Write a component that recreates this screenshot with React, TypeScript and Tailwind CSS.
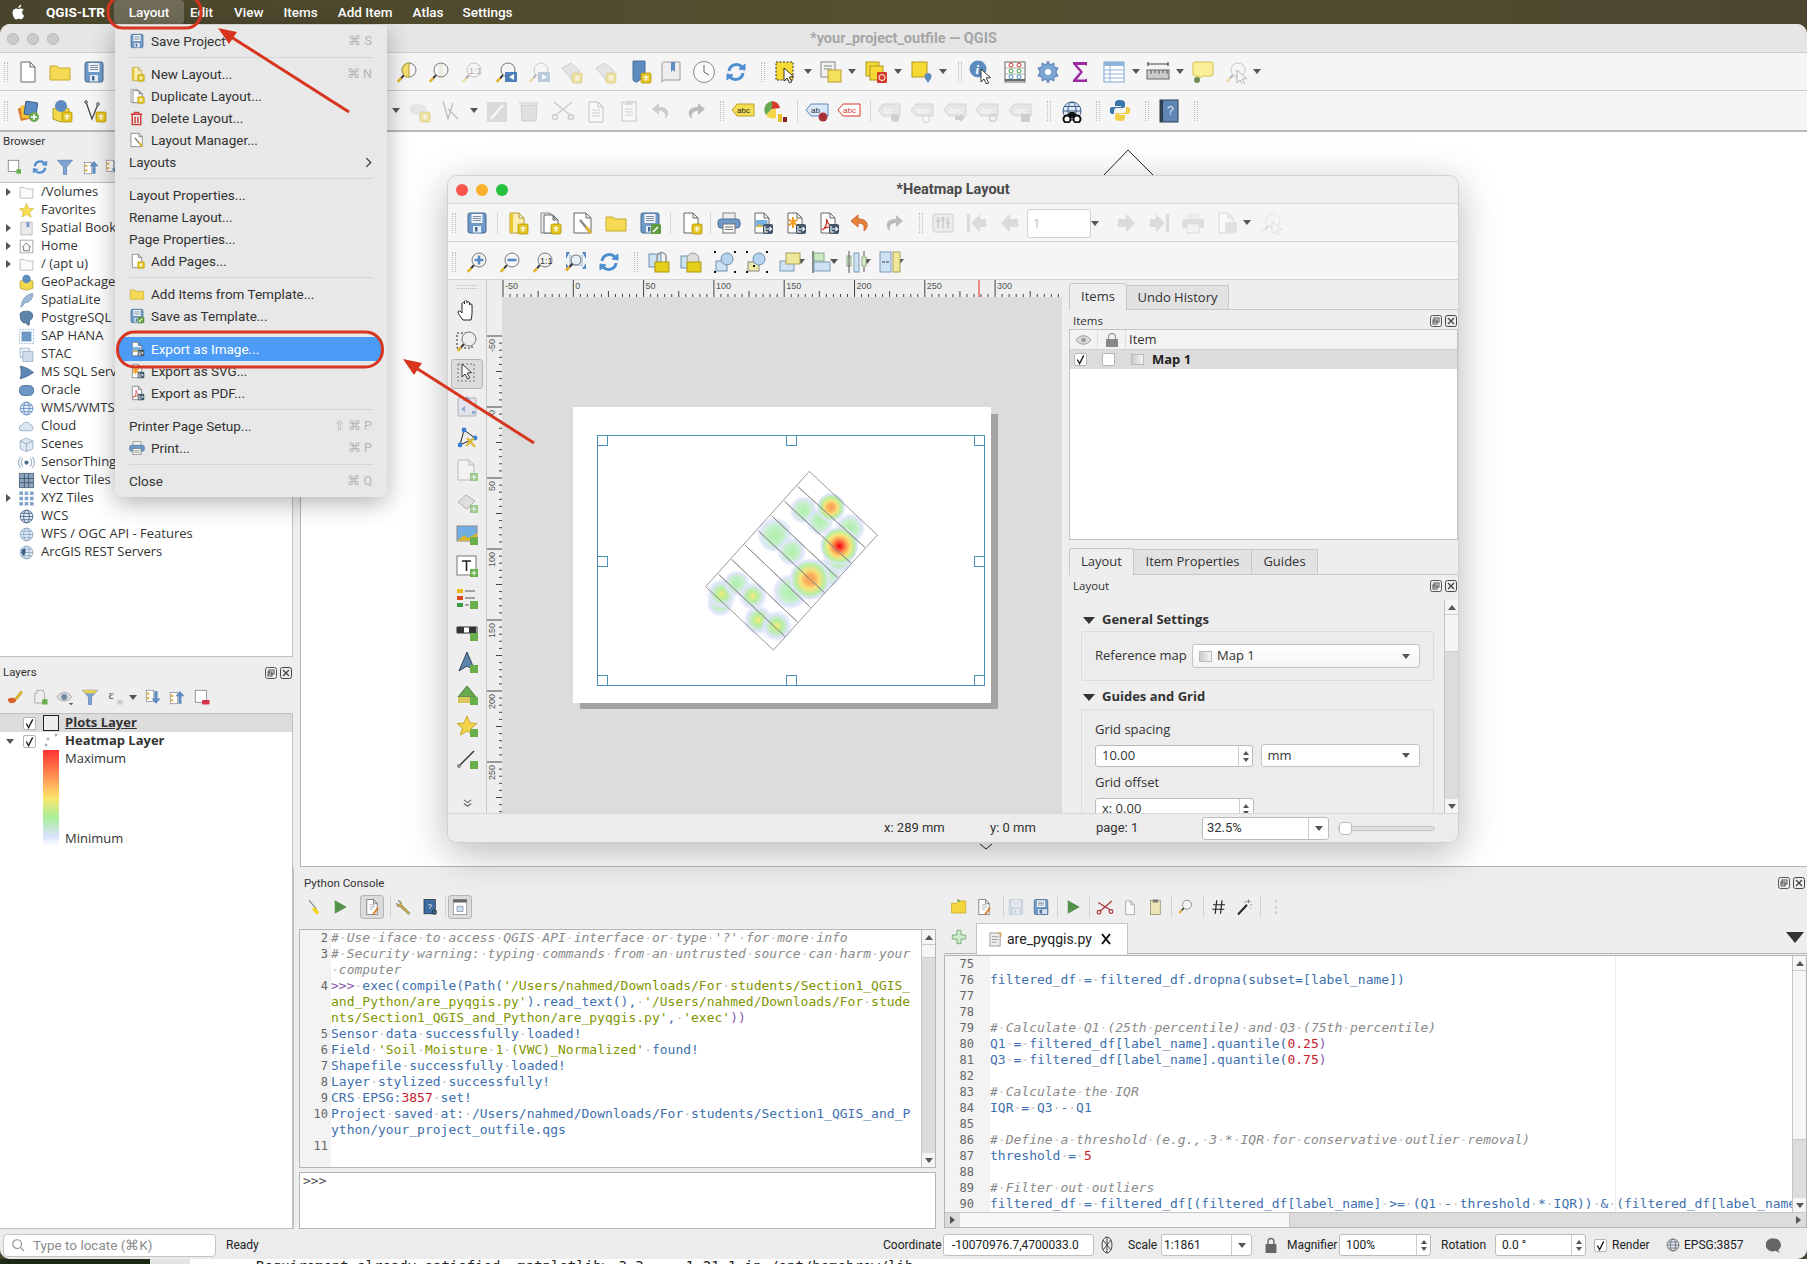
import type { ReactNode } from 'react';

// --- small drawing helpers for the QGIS toolbar icons ---
function Page({ x = 5, y = 2, w = 14, h = 20, fill = '#fff', stroke = '#666' }) {
  return <path d={`M${x} ${y}h${w - 5}l5 5v${h - 5}h-${w}z M${x + w - 5} ${y}v5h5`} fill={fill} stroke={stroke} />;
}
function Badge({ x = 13, y = 13 }) {
  return (
    <g>
      <rect x={x} y={y} width="10" height="10" rx="1.5" fill="#e3c31a" stroke="#b0960f" strokeWidth=".8" />
      <path d={`M${x + 5} ${y + 2}v6M${x + 2.4} ${y + 3.5}l5.2 3M${x + 7.6} ${y + 3.5}l-5.2 3`} stroke="#fff" strokeWidth="1.1" />
    </g>
  );
}
function ExpBadge() {
  return (
    <g>
      <rect x="13" y="13" width="10" height="10" rx="2" fill="#42566b" />
      <path d="M15 15v6h3M16 18h5M19.5 16l2 2-2 2" stroke="#fff" fill="none" strokeWidth="1.1" />
    </g>
  );
}
function Floppy() {
  return (
    <g>
      <rect x="3" y="2" width="18" height="20" rx="2" fill="#6f9ac8" stroke="#44688f" />
      <rect x="6.5" y="3" width="11" height="9" fill="#f2f5f9" />
      <path d="M8 5.5h8M8 7.5h8M8 9.5h8" stroke="#7c8ea3" />
      <rect x="8" y="15" width="8" height="6.5" fill="#e8eef5" />
      <rect x="10" y="16" width="2.4" height="4.5" fill="#44688f" />
    </g>
  );
}
function Lens({ cx = 14, cy = 10, r = 7, fill = '#f5f5f5', children }: { cx?: number; cy?: number; r?: number; fill?: string; children?: ReactNode }) {
  const hx = cx - r * 0.7;
  const hy = cy + r * 0.7;
  return (
    <g>
      <path d={`M${hx} ${hy}L${hx - 3} ${hy + 3.5}`} stroke="#333" strokeWidth="2" />
      <path d={`M${hx - 3} ${hy + 3.5}L${hx - 6.5} ${hy + 7}`} stroke="#e0b32a" strokeWidth="2.6" />
      <circle cx={cx} cy={cy} r={r} fill={fill} stroke="#777" />
      {children}
    </g>
  );
}
function Cursor({ x = 0, y = 0 }) {
  return <path transform={`translate(${x} ${y})`} d="M9 8v13l3-3 2.5 5 2.2-1-2.5-5 4.3-.4z" fill="#fff" stroke="#222" strokeWidth=".9" />;
}
function Tag({ t, fill, stroke, ink }: { t: string; fill: string; stroke: string; ink: string }) {
  return (
    <g>
      <path d="M1 11l5-6h17v12H6z" fill={fill} stroke={stroke} />
      <text x="6" y="14" fontSize="8" fill={ink} fontFamily="Liberation Sans, sans-serif">{t}</text>
    </g>
  );
}
function Globe({ c = '#4f7fb8' }) {
  return (
    <g fill="none" stroke={c}>
      <circle cx="12" cy="12" r="9" fill="#dfeaf6" />
      <ellipse cx="12" cy="12" rx="4" ry="9" />
      <path d="M3 12h18M4.5 7.5h15M4.5 16.5h15" />
    </g>
  );
}
function Refresh() {
  return (
    <g fill="none" stroke="#4f8fd0" strokeWidth="3">
      <path d="M5 11a7.5 7.5 0 0 1 13-4" />
      <path d="M19 13a7.5 7.5 0 0 1-13 4" />
      <path d="M15 9l6 1 0-6z" fill="#4f8fd0" strokeWidth="1" />
      <path d="M9 15l-6-1 0 6z" fill="#4f8fd0" strokeWidth="1" />
    </g>
  );
}
function Lock({ c = '#e6cf1b' }) {
  return (
    <g>
      <rect x="2" y="4" width="12" height="13" fill="#cfe2f2" stroke="#6d8eb0" />
      <path d="M10 13V7a4.5 4.5 0 0 1 9 0v6" fill="none" stroke="#999" strokeWidth="1.6" />
      <rect x="8" y="12" width="14" height="10" fill={c} stroke="#a79612" />
    </g>
  );
}

const icons: Record<string, ReactNode> = {
  file: <Page />,
  folder: <path d="M2 20V6h7l2 2h11v12z" fill="#f6da55" stroke="#c8a92a" />,
  save: <Floppy />,
  saveAs: (
    <>
      <Floppy />
      <rect x="13" y="13" width="10" height="10" rx="1.5" fill="#5f9a3f" />
      <path d="M15 21l5-5" stroke="#fff" strokeWidth="1.6" />
    </>
  ),
  newLayout: (
    <>
      <Page fill="#fbeeb0" stroke="#b89a2a" />
      <path d="M5 3h3v18H5z" fill="#e8c82e" />
      <Badge />
    </>
  ),
  dupLayout: (
    <>
      <Page x={3} y={2} stroke="#888" fill="#eee" />
      <Page x={6} y={4} h={18} />
      <Badge />
    </>
  ),
  manager: (
    <>
      <Page x={3} w={17} />
      <path d="M9 9l10 12" stroke="#888" strokeWidth="2.4" />
      <path d="M15 16l5 6" stroke="#dcb834" strokeWidth="3" />
    </>
  ),
  pageNew: (
    <>
      <Page />
      <Badge />
    </>
  ),
  print: (
    <>
      <rect x="6" y="2" width="12" height="8" fill="#eee" stroke="#888" />
      <rect x="1" y="8" width="22" height="9" rx="3" fill="#6f9ac8" stroke="#4e7198" />
      <rect x="6" y="13" width="12" height="9" fill="#f7f7f7" stroke="#777" />
      <path d="M8 16h8M8 18.5h8" stroke="#777" />
    </>
  ),
  expImg: (
    <>
      <Page />
      <rect x="5.5" y="9" width="12" height="7" fill="#78b0e0" />
      <path d="M5.5 16l4-3 3 2 5-3v4z" fill="#d8b53a" />
      <ExpBadge />
    </>
  ),
  expSvg: (
    <>
      <Page />
      <path d="M10 6v11M5.5 8.5l9 6M14.5 8.5l-9 6" stroke="#f29a1f" strokeWidth="2" />
      <ExpBadge />
    </>
  ),
  expPdf: (
    <>
      <Page />
      <path d="M6 19c4-2 5-7 4.500-11 1 4 3 7 7 8-4-.5-8 0-11.500 3z" fill="none" stroke="#d33a2a" strokeWidth="1.3" />
      <ExpBadge />
    </>
  ),
  undo: <path d="M9 4L2 10l7 6v-4c5 0 7 2 6 8 5-4 5-12-6-12z" fill="#e8813a" stroke="#c9682a" />,
  redo: <path d="M15 4l7 6-7 6v-4c-5 0-7 2-6 8-5-4-5-12 6-12z" fill="#bbb" />,
  atlas: (
    <>
      <rect x="2" y="3" width="20" height="18" rx="2" fill="#ddd" stroke="#999" />
      <path d="M7 6v11M12 6v11M17 6v11M5 10h4M10 8h4M15 12h4" stroke="#888" strokeWidth="1.4" />
    </>
  ),
  first: <path d="M3 3h3v18H3zM22 8h-6V3l-9 9 9 9v-5h6z" fill="#b5b5b5" />,
  prev: <path d="M21 8h-8V3l-9 9 9 9v-5h8z" fill="#b5b5b5" />,
  next: <path d="M3 8h8V3l9 9-9 9v-5H3z" fill="#b5b5b5" />,
  last: <path d="M21 3h-3v18h3zM2 8h6V3l9 9-9 9v-5H2z" fill="#b5b5b5" />,
  atlasPrint: (
    <>
      <rect x="6" y="2" width="12" height="8" fill="#ddd" />
      <rect x="1" y="8" width="22" height="9" rx="3" fill="#bbb" />
      <rect x="6" y="13" width="12" height="9" fill="#eee" stroke="#bbb" />
    </>
  ),
  atlasExp: (
    <>
      <Page stroke="#aaa" />
      <rect x="11" y="11" width="12" height="11" rx="2" fill="#c4c4c4" />
    </>
  ),
  zoomIn: (
    <Lens>
      <path d="M14 5.500v9M9.500 10h9" stroke="#5b8bc4" strokeWidth="2.600" />
    </Lens>
  ),
  zoomOut: (
    <Lens>
      <path d="M9.500 10h9" stroke="#5b8bc4" strokeWidth="2.600" />
    </Lens>
  ),
  zoom11: (
    <Lens>
      <text x="9" y="13.500" fontSize="9" fill="#333" fontFamily="Liberation Sans, sans-serif">1:1</text>
    </Lens>
  ),
  zoomFull: (
    <>
      <path d="M6 2H2v7zM18 2h4v7zM6 19H2v-6zM18 19h4v-6z" fill="#5b8bc4" />
      <rect x="5" y="5" width="14" height="11" fill="#8fb3d9" opacity=".5" />
      <Lens cx={12} cy={10} r={5} fill="#e8eef5" />
    </>
  ),
  refresh: <Refresh />,
  lock: <Lock />,
  unlock: (
    <>
      <rect x="2" y="6" width="12" height="12" fill="#cfe2f2" stroke="#6d8eb0" />
      <circle cx="14" cy="9" r="6" fill="#ddd" stroke="#999" />
      <rect x="8" y="12" width="14" height="10" fill="#e6cf1b" stroke="#a79612" />
    </>
  ),
  group: (
    <>
      <rect x="3" y="11" width="11" height="10" fill="#cfe2f2" stroke="#6d8eb0" />
      <circle cx="14" cy="9" r="6" fill="#b7d4ee" stroke="#6d8eb0" />
      <path d="M1 1h2v2H1zM21 1h2v2h-2zM1 21h2v2H1zM21 21h2v2h-2z" fill="#111" />
    </>
  ),
  ungroup: (
    <>
      <rect x="3" y="12" width="11" height="9" fill="#eaeaa8" stroke="#888" />
      <circle cx="14" cy="9" r="6" fill="#b7d4ee" stroke="#6d8eb0" />
      <path d="M1 1h2v2H1zM21 1h2v2h-2zM1 21h2v2H1zM21 21h2v2h-2zM8 15h2v2H8z" fill="#111" />
    </>
  ),
  raise: (
    <>
      <rect x="2" y="11" width="14" height="10" fill="#cfe2f2" stroke="#7f9cb8" />
      <rect x="8" y="3" width="14" height="11" fill="#efe89a" stroke="#a8a05a" />
    </>
  ),
  alignL: (
    <>
      <path d="M2 1v22" stroke="#222" />
      <rect x="3" y="3" width="10" height="8" fill="#c8ecc0" stroke="#8aa88a" />
      <rect x="3" y="12" width="16" height="9" fill="#cfe2f2" stroke="#7f9cb8" />
    </>
  ),
  distrib: (
    <>
      <rect x="2" y="6" width="4" height="10" fill="#d8f0c8" stroke="#8aa88a" />
      <rect x="9" y="3" width="5" height="19" fill="#cfe2f2" stroke="#7f9cb8" />
      <rect x="17" y="7" width="4" height="9" fill="#d8f0c8" stroke="#8aa88a" />
      <path d="M4 1v22M19 1v5M19 17v5" stroke="#555" />
    </>
  ),
  resize: (
    <>
      <rect x="2" y="2" width="11" height="20" fill="#cfe2f2" stroke="#7f9cb8" />
      <rect x="15" y="2" width="7" height="20" fill="#efe89a" stroke="#a8a05a" />
      <path d="M4 12h3M11 12H8" stroke="#335" strokeWidth="1.200" />
    </>
  ),
  hand: (
    <path d="M8 22c-2-3-5-6-5-8 0-1.500 2-1.500 3 0l1 1V6c0-2 2.500-2 2.500 0V4c0-2 2.500-2 2.500 0v1c0-2 2.500-2 2.500 0v2c0-1.500 2.500-1.500 2.500 0 0 4 .5 10-1 15z" fill="#fff" stroke="#222" />
  ),
  zoomBox: (
    <>
      <rect x="2" y="3" width="15" height="15" fill="none" stroke="#222" strokeDasharray="2 2" />
      <Lens cx={14} cy={9} r={7} fill="#eee" />
    </>
  ),
  select: (
    <>
      <rect x="3" y="2" width="16" height="17" fill="none" stroke="#777" strokeDasharray="2 2" />
      <Cursor x={-2} y={-6} />
    </>
  ),
  moveContent: (
    <>
      <rect x="3" y="4" width="18" height="18" rx="1" fill="#dde" stroke="#888" />
      <path d="M12 2l4 5H8zM6 15l4-3v6zM17 20h3v-3h-3z" fill="#4f7fb8" />
    </>
  ),
  nodes: (
    <>
      <path d="M5 19L9 4l11 8z" fill="none" stroke="#222" />
      <circle cx="9" cy="4" r="2.400" fill="#3a7fd5" />
      <circle cx="20" cy="12" r="2.400" fill="#3a7fd5" />
      <circle cx="5" cy="19" r="2.400" fill="#3a7fd5" />
      <path d="M11 20l8-8M12 12l8 9" stroke="#dcb834" strokeWidth="2.200" />
    </>
  ),
  addMap: (
    <>
      <Page x={3} y={2} w={16} fill="#f5f5f5" stroke="#999" />
      <rect x="15" y="15" width="8" height="8" fill="#68b04a" />
      <path d="M19 16.500v5M16.500 19h5" stroke="#fff" />
    </>
  ),
  add3d: (
    <>
      <path d="M3 12l8-7 9 6-8 8z" fill="#d5d5d5" stroke="#888" />
      <rect x="15" y="15" width="8" height="8" fill="#68b04a" />
      <path d="M19 16.500v5M16.500 19h5" stroke="#fff" />
    </>
  ),
  addPic: (
    <>
      <rect x="2" y="4" width="20" height="15" fill="#70aee4" stroke="#888" />
      <path d="M2 19l7-6 4 3 9-5v8z" fill="#d9b534" />
      <rect x="15" y="15" width="8" height="8" fill="#68b04a" />
    </>
  ),
  addLabel: (
    <>
      <rect x="2" y="2" width="19" height="19" fill="#fff" stroke="#777" />
      <path d="M7 7h9M11.500 7v10" stroke="#222" strokeWidth="1.600" />
      <rect x="15" y="15" width="8" height="8" fill="#68b04a" />
      <path d="M19 16.500v5M16.500 19h5" stroke="#fff" />
    </>
  ),
  addLegend: (
    <>
      <rect x="2" y="3" width="6" height="4" fill="#eab61e" />
      <rect x="2" y="10" width="6" height="4" fill="#d9481f" />
      <rect x="2" y="17" width="6" height="4" fill="#3f9a4a" />
      <path d="M10 5h10M10 12h10M10 19h4" stroke="#888" strokeWidth="1.400" />
      <rect x="15" y="15" width="8" height="8" fill="#68b04a" />
    </>
  ),
  addScale: (
    <>
      <path d="M2 9h20v6H2z" fill="#fff" stroke="#333" />
      <path d="M2 9h7v6H2zM14 9h7v6h-7z" fill="#333" />
      <rect x="15" y="15" width="8" height="8" fill="#68b04a" />
    </>
  ),
  addNorth: (
    <>
      <path d="M12 2l8 19-8-5-8 5z" fill="#5d86ad" stroke="#345" />
      <rect x="15" y="15" width="8" height="8" fill="#68b04a" />
    </>
  ),
  addShape: (
    <>
      <path d="M3 15l9-11 9 11z" fill="#6aa84f" stroke="#4a7a3a" />
      <rect x="3" y="15" width="18" height="6" fill="#d9c65c" />
      <rect x="15" y="15" width="8" height="8" fill="#68b04a" />
    </>
  ),
  addMarker: (
    <>
      <path d="M12 2l3 7 7 .5-5.500 4.500 2 7-6.500-4-6.500 4 2-7L2 9.500 9 9z" fill="#f3d44a" stroke="#c9a92a" />
      <rect x="15" y="15" width="8" height="8" fill="#68b04a" />
    </>
  ),
  addArrow: (
    <>
      <path d="M4 20L19 5" stroke="#333" strokeWidth="1.400" />
      <circle cx="4" cy="20" r="2" fill="#888" />
      <rect x="15" y="15" width="8" height="8" fill="#68b04a" />
    </>
  ),
  // main window
  zoomSel: (
    <Lens>
      <path d="M14 3a7 7 0 0 0-6 10 5 5 0 0 0 6 4z" fill="#f4e06d" stroke="#bda53b" />
    </Lens>
  ),
  zoomLayer: (
    <Lens>
      <path d="M12 4h4v12h-4z" fill="#ecebdd" />
    </Lens>
  ),
  zoom11g: (
    <g opacity=".4">
      <Lens>
        <text x="9" y="13.500" fontSize="9" fill="#333" fontFamily="Liberation Sans, sans-serif">1:1</text>
      </Lens>
    </g>
  ),
  zoomLast: (
    <>
      <Lens />
      <rect x="11" y="12" width="12" height="10" fill="#4f7fb8" />
      <path d="M20 14l-5 3 5 3z" fill="#fff" />
    </>
  ),
  zoomNext: (
    <g opacity=".35">
      <Lens />
      <rect x="11" y="12" width="12" height="10" fill="#4f7fb8" />
      <path d="M15 14l5 3-5 3z" fill="#fff" />
    </g>
  ),
  decor: (
    <>
      <path d="M3 8l9-5 9 8-8 9z" fill="#ccc" stroke="#999" />
      <Badge />
    </>
  ),
  bmMark: (
    <>
      <path d="M5 1h12v20l-4-2-4 3c-4 0-4-2-4-4z" fill="#5f8cc0" stroke="#4a6f9a" />
      <Badge />
    </>
  ),
  bmPanel: (
    <>
      <path d="M3 4c0-2 2-2 2-2h16v18H5c-2 0-2 2-2 2z" fill="#eee" stroke="#999" />
      <path d="M12 2h4v10l-2-2-2 2z" fill="#5f8cc0" />
    </>
  ),
  clock: (
    <>
      <circle cx="12" cy="12" r="10.500" fill="#fafafa" stroke="#888" />
      <path d="M12 5v7l5 3" stroke="#666" fill="none" />
    </>
  ),
  selFeat: (
    <>
      <rect x="3" y="2" width="17" height="18" fill="#f6d934" stroke="#333" strokeDasharray="2 1.500" />
      <Cursor x={2} y={0} />
    </>
  ),
  selForm: (
    <>
      <rect x="2" y="2" width="14" height="15" fill="#f2f2f2" stroke="#888" />
      <path d="M5 6h8M5 9h8" stroke="#888" />
      <rect x="9" y="10" width="13" height="12" fill="#f3e05c" stroke="#b8a22e" />
    </>
  ),
  selDesel: (
    <>
      <rect x="2" y="2" width="13" height="14" fill="#f6d934" stroke="#b09a20" />
      <rect x="6" y="6" width="13" height="14" fill="#f6d934" stroke="#b09a20" />
      <rect x="13" y="12" width="10" height="11" rx="1" fill="#d33a2a" />
      <circle cx="18" cy="17.500" r="3" fill="none" stroke="#fff" />
    </>
  ),
  selLoc: (
    <>
      <rect x="3" y="2" width="15" height="15" fill="#f6d934" stroke="#b09a20" />
      <path d="M19 13a3.500 3.500 0 0 0-3.500 3.500c0 2.500 3.500 6 3.500 6s3.500-3.500 3.500-6A3.500 3.500 0 0 0 19 13z" fill="#5f8cc0" />
    </>
  ),
  identify: (
    <>
      <circle cx="10" cy="9" r="8.500" fill="#5f8cc0" />
      <text x="7.500" y="14" fontSize="13" fontWeight="700" fontStyle="italic" fill="#fff" fontFamily="Liberation Serif, serif">i</text>
      <Cursor x={4} y={1} />
    </>
  ),
  abacus: (
    <>
      <rect x="2" y="2" width="20" height="20" fill="#fff" stroke="#666" />
      <path d="M2 8h20M2 14h20" stroke="#aaa" />
      <path d="M2 20h20" stroke="#666" strokeWidth="2" />
      <circle cx="8" cy="5" r="2" fill="none" stroke="#c33" />
      <circle cx="16" cy="5" r="2" fill="none" stroke="#c33" />
      <circle cx="8" cy="11" r="2" fill="none" stroke="#4a4" />
      <circle cx="16" cy="11" r="2" fill="none" stroke="#4a4" />
      <circle cx="8" cy="17" r="2" fill="none" stroke="#48c" />
      <circle cx="16" cy="17" r="2" fill="none" stroke="#48c" />
    </>
  ),
  gear: (
    <>
      <path d="M12 1l2 4 4-2 0 4 4 1-2 4 2 4-4 1 0 4-4-2-2 4-2-4-4 2 0-4-4-1 2-4-2-4 4-1 0-4 4 2z" fill="#7da4d3" stroke="#5a82b3" />
      <circle cx="12" cy="12" r="3" fill="#fff" />
    </>
  ),
  sigma: <path d="M19 2H5v2l7 8-7 8v2h14v-4l-1.500 1.500H9l6-7.500-6-7h8.500L19 6z" fill="#9a2aa0" />,
  attrTable: (
    <>
      <rect x="2" y="2" width="20" height="20" fill="#fff" stroke="#7da4d3" />
      <rect x="2" y="2" width="20" height="4" fill="#8fb3d9" />
      <path d="M2 10h20M2 14h20M2 18h20M8 6v16" stroke="#8fb3d9" />
    </>
  ),
  ruler: (
    <>
      <path d="M2 4h20M2 2v4M22 2v4" stroke="#444" strokeWidth="1.200" />
      <rect x="1" y="10" width="22" height="9" fill="#ccc" stroke="#666" />
      <path d="M5 10v4M9 10v3M13 10v4M17 10v3M21 10v4" stroke="#555" />
    </>
  ),
  bubble: (
    <>
      <path d="M3 2h18a2 2 0 0 1 1 2v10a2 2 0 0 1-2 2H12l-5 3 1-3H4a2 2 0 0 1-2-2V4a2 2 0 0 1 1-2z" fill="#fbef9a" stroke="#d4c04a" />
      <circle cx="6" cy="20" r="3" fill="#6e8c5a" />
    </>
  ),
  lensOff: (
    <g opacity=".35">
      <Lens />
      <Cursor x={4} y={2} />
    </g>
  ),
  dsm: (
    <>
      <rect x="3" y="8" width="11" height="13" rx="1" fill="#d9762a" transform="rotate(-14 8 14)" />
      <rect x="5" y="6" width="11" height="13" rx="1" fill="#f0c23a" transform="rotate(-6 10 12)" />
      <rect x="9" y="3" width="12" height="13" rx="1" fill="#5b8bc4" stroke="#3d5f86" transform="rotate(8 15 9)" />
      <circle cx="18" cy="18" r="5" fill="#6aa84f" />
      <path d="M18 15v6M15 18h6" stroke="#fff" strokeWidth="1.400" />
    </>
  ),
  gpkgNew: (
    <>
      <path d="M4 10l8-3 8 3v10l-8 3-8-3z" fill="#f3d94a" stroke="#a89824" />
      <circle cx="12" cy="7" r="6" fill="#5f8cc0" />
      <Badge />
    </>
  ),
  vNew: (
    <>
      <path d="M3 3l6 17 6-15" fill="none" stroke="#444" strokeWidth="1.300" />
      <circle cx="3" cy="3" r="1.300" fill="#fff" stroke="#444" />
      <circle cx="15" cy="5" r="1.300" fill="#fff" stroke="#444" />
      <Badge />
    </>
  ),
  cloudNew: (
    <>
      <path d="M5 15c-5-3-2-11 5-10s12 2 8 8l-4 3z" fill="#cfcfcf" />
      <Badge />
    </>
  ),
  editPen: (
    <g opacity=".35">
      <path d="M3 2l5 18 5-16M8 10l10 10" stroke="#555" fill="none" strokeWidth="1.300" />
    </g>
  ),
  editSave: (
    <g opacity=".35">
      <path d="M2 3h20v20H2z" fill="#aaa" />
      <path d="M6 20l12-14" stroke="#fff" strokeWidth="2.500" />
    </g>
  ),
  trash: (
    <g opacity=".35">
      <path d="M4 6h16l-1 16H5zM2 4h20" fill="#bbb" stroke="#888" />
    </g>
  ),
  cut: (
    <g opacity=".35" stroke="#888" fill="none" strokeWidth="1.600">
      <path d="M3 3l16 13M21 3L5 16" />
      <circle cx="4" cy="18" r="2.500" />
      <circle cx="20" cy="18" r="2.500" />
    </g>
  ),
  copy: (
    <g opacity=".35">
      <Page x={5} y={3} />
      <path d="M8 11h8M8 14h8M8 17h8" stroke="#888" />
    </g>
  ),
  paste: (
    <g opacity=".35">
      <rect x="5" y="3" width="14" height="19" fill="#fff" stroke="#777" />
      <rect x="8" y="2" width="8" height="4" fill="#aaa" />
      <path d="M8 10h8M8 13h8M8 16h8" stroke="#888" />
    </g>
  ),
  undoG: <path d="M9 4L2 10l7 6v-4c5 0 7 2 6 8 5-4 5-12-6-12z" fill="#ccc" />,
  abcY: <Tag t="abc" fill="#f6de55" stroke="#b8a22e" ink="#222" />,
  pie: (
    <>
      <path d="M8 2a9 9 0 0 1 8 7l-8 1z" fill="#d33a2a" />
      <path d="M8 2a9 9 0 0 0-6 14l6-6z" fill="#6aa84f" />
      <path d="M2 16a9 9 0 0 0 10 3V10H8z" fill="#f3d44a" />
      <rect x="14" y="15" width="4" height="8" fill="#e7c42c" />
      <rect x="19" y="18" width="4" height="5" fill="#8c1f1f" />
    </>
  ),
  abB: (
    <>
      <Tag t="ab" fill="#dbe8f6" stroke="#5f8cc0" ink="#234" />
      <circle cx="18" cy="18" r="4.500" fill="#a8323a" />
    </>
  ),
  abcR: <Tag t="abc" fill="#fff" stroke="#d33a2a" ink="#d33a2a" />,
  abG: <g opacity=".35"><Tag t="ab" fill="#ccc" stroke="#999" ink="#fff" /><circle cx="18" cy="19" r="4" fill="#888" /></g>,
  abcG1: <g opacity=".35"><Tag t="abc" fill="#ccc" stroke="#999" ink="#fff" /><circle cx="16" cy="20" r="3.500" fill="#fff" stroke="#888" /></g>,
  abcG2: <g opacity=".35"><Tag t="abc" fill="#ccc" stroke="#999" ink="#fff" /><path d="M12 17h5v-2l5 4-5 4v-2h-5z" fill="#888" /></g>,
  abcG3: <g opacity=".35"><Tag t="abc" fill="#ccc" stroke="#999" ink="#fff" /><circle cx="18" cy="19" r="3.500" fill="none" stroke="#888" strokeWidth="1.500" /></g>,
  abcG4: <g opacity=".35"><Tag t="abc" fill="#ccc" stroke="#999" ink="#fff" /><rect x="13" y="15" width="9" height="8" fill="#888" /></g>,
  binoc: (
    <>
      <Globe c="#3d5f86" />
      <circle cx="7" cy="20" r="3.500" fill="#fff" stroke="#111" strokeWidth="2" />
      <circle cx="17" cy="20" r="3.500" fill="#fff" stroke="#111" strokeWidth="2" />
      <path d="M7 16l3-3h4l3 3-3 3h-4z" fill="#111" />
    </>
  ),
  python: (
    <>
      <path d="M12 1C7 1 7 3 7 5v2h6v1H4C1 8 1 15 4 15h2v-3c0-2 1-3 3-3h6c1 0 2-1 2-2V4c0-2-2-3-5-3z" fill="#3b77ab" />
      <path d="M12 22c5 0 5-2 5-4v-2h-6v-1h9c3 0 3-7 0-7h-2v3c0 2-1 3-3 3H9c-1 0-2 1-2 2v3c0 2 2 3 5 3z" fill="#f2cf48" />
    </>
  ),
  help: (
    <>
      <rect x="3" y="1" width="18" height="22" fill="#5f86b4" stroke="#2e3f52" />
      <rect x="3" y="1" width="3" height="22" fill="#2e3f52" />
      <text x="10" y="16" fontSize="12" fill="#dfe8f2" fontFamily="Liberation Sans, sans-serif">?</text>
    </>
  ),
  // browser + layers panels
  addDock: (
    <>
      <rect x="3" y="3" width="14" height="15" fill="#fff" stroke="#777" />
      <rect x="14" y="15" width="6" height="6" fill="#68b04a" />
    </>
  ),
  filter: <path d="M2 3h20l-8 9v10h-4V12z" fill="#7da4d3" stroke="#5a82b3" />,
  filterY: (
    <>
      <path d="M2 3h20l-8 9v10h-4V12z" fill="#7da4d3" stroke="#5a82b3" />
      <path d="M2 3h20l-4 4H6z" fill="#f3d44a" />
    </>
  ),
  collapse: (
    <>
      <rect x="3" y="6" width="10" height="15" fill="#fff" stroke="#888" />
      <path d="M4 9h3v3H4zM4 15h3v3H4z" fill="#e6b03a" />
      <path d="M16 4l6 7h-4v10h-4V11h-4z" fill="#5f8cc0" />
    </>
  ),
  expand: (
    <>
      <rect x="3" y="3" width="10" height="15" fill="#fff" stroke="#888" />
      <path d="M4 6h3v3H4zM4 12h3v3H4z" fill="#e6b03a" />
      <path d="M16 21l6-7h-4V4h-4v10h-4z" fill="#5f8cc0" />
    </>
  ),
  brush: (
    <>
      <path d="M3 14c4-1 8-2 10 1s-3 6-7 5c-3-1-4-4-3-6z" fill="#d9602a" />
      <path d="M12 14l8-10 2 2-8 10z" fill="#e8c32a" stroke="#aa8d18" />
    </>
  ),
  addGroup: (
    <>
      <path d="M5 7h3V3h8l2 4v13H5z" fill="#eee" stroke="#999" />
      <rect x="15" y="15" width="7" height="7" fill="#68b04a" />
    </>
  ),
  eye: (
    <>
      <path d="M1 12c5-8 15-8 20 0-5 7-15 7-20 0z" fill="#ddd" stroke="#999" />
      <circle cx="11" cy="12" r="4" fill="#6f8aa6" />
      <path d="M17 20l3 3 3-3z" fill="#555" />
    </>
  ),
  expr: (
    <>
      <text x="2" y="15" fontSize="17" fill="#555" fontFamily="Liberation Serif, serif">ε</text>
      <path d="M14 16h7v6h-7z" fill="#ccc" />
    </>
  ),
  rmLayer: (
    <>
      <rect x="3" y="3" width="15" height="16" fill="#fff" stroke="#777" />
      <rect x="12" y="16" width="10" height="6" rx="1.500" fill="#d8334a" />
    </>
  ),
  broom: (
    <>
      <path d="M4 3l10 12" stroke="#777" strokeWidth="1.500" />
      <path d="M11 12l7 7-4 3-6-7z" fill="#f2d21f" />
    </>
  ),
  play: <path d="M5 3l16 9-16 9z" fill="#54924a" />,
  editorIco: (
    <>
      <Page />
      <path d="M9 9h7M9 12h7M9 15h4" stroke="#999" />
      <path d="M12 22l7-10 2 2-7 9z" fill="#d9802a" />
    </>
  ),
  wrench: <path d="M4 3l4 2 1 4 11 11-2 2L7 12l-4-1-1-4 3 2 2-2z" fill="#c9a83a" stroke="#888" />,
  book: (
    <>
      <rect x="4" y="2" width="15" height="19" fill="#3d6ca0" stroke="#1f2f44" />
      <text x="9" y="15" fontSize="10" fill="#fff" fontFamily="Liberation Sans, sans-serif">?</text>
      <circle cx="18" cy="19" r="3" fill="none" stroke="#222" />
    </>
  ),
  panel: (
    <>
      <rect x="3" y="2" width="18" height="20" fill="#fff" stroke="#888" />
      <rect x="3" y="2" width="18" height="4" fill="#666" />
      <path d="M8 11h8v7H8z" fill="#cfe0ee" stroke="#88a" />
    </>
  ),
  openFile: (
    <>
      <path d="M2 20V7h7l2-3h10v16z" fill="#f6d63f" stroke="#c8a92a" />
      <path d="M10 2l3 3" stroke="#68a03f" strokeWidth="2" />
    </>
  ),
  saveG: <g opacity=".25"><Floppy /></g>,
  saveB: <><Floppy /><rect x="13" y="14" width="8" height="8" fill="#cfe0ee" stroke="#44688f" /></>,
  cutR: (
    <g stroke="#a33" fill="none" strokeWidth="1.500">
      <path d="M3 6l16 10M21 4L5 18" />
      <circle cx="4" cy="19" r="2.500" />
      <circle cx="20" cy="18" r="2.500" />
    </g>
  ),
  copyG: <g opacity=".6"><Page x={6} y={4} h={18} w={12} /></g>,
  pasteY: (
    <>
      <rect x="6" y="3" width="13" height="19" fill="#ece6b8" stroke="#8a8a6a" />
      <rect x="9" y="2" width="7" height="4" fill="#777" />
    </>
  ),
  find: <Lens cx={12} cy={9} r={6} />,
  hash: <path d="M9 3L7 21M16 3l-2 18M4 9h16M3 15h16" stroke="#222" strokeWidth="1.600" />,
  wand: (
    <>
      <path d="M4 22L16 9" stroke="#222" strokeWidth="2.600" />
      <path d="M18 2v5M15 4.500h6M21 8l1 2M14 6l-2-1M20 13l1 1" stroke="#666" />
    </>
  ),
  dots: <path d="M12 3h3v3h-3zM12 11h3v3h-3zM12 18h3v3h-3z" fill="#ccc" />,
  plus: <path d="M9 2h6v7h7v6h-7v7H9v-7H2V9h7z" fill="#cfeccf" stroke="#4a9a4a" />,
};

type Item = [string, number, ('d' | 'a')?];

// toolbar row: items are given by their centre x, the gaps come out of the data
function Tools({ items, origin = 0, size = 24 }: { items: Item[]; origin?: number; size?: number }) {
  let right = origin;
  return (
    <div className="flex items-center h-full">
      {items.map(([name, cx, flag], i) => {
        const w = name === 'grip' ? 4 : name === 'sep' ? 1 : name === 'arrow' ? 8 : size;
        const ml = cx - w / 2 - right;
        right = cx + w / 2;
        if (name === 'grip')
          return <div key={i} style={{ marginLeft: ml }} className="w-[4px] h-[20px] shrink-0 border-x border-dotted border-[#bbb]" />;
        if (name === 'sep') return <div key={i} style={{ marginLeft: ml }} className="w-px h-[22px] shrink-0 bg-[#d4d4d4]" />;
        if (name === 'arrow') return <div key={i} style={{ marginLeft: ml }} className="shrink-0"><Caret /></div>;
        return (
          <div key={i} style={{ marginLeft: ml, width: w, height: w }} className="relative shrink-0">
            {flag === 'a' && <div className="absolute -inset-[3px] rounded-[3px] bg-[#dcdcdc] border border-[#b5b5b5]" />}
            <Ico name={name} size={w} className={'relative' + (flag === 'd' ? ' opacity-40' : '')} />
          </div>
        );
      })}
    </div>
  );
}

function Ico({ name, size = 24, className }: { name: string; size?: number; className?: string }) {
  return (
    <svg viewBox="0 0 24 24" width={size} height={size} className={className} strokeWidth="1">
      {icons[name]}
    </svg>
  );
}

function Caret() {
  return <div className="w-0 h-0 border-x-[4px] border-x-transparent border-t-[5px] border-t-[#555]" />;
}

function DockButtons() {
  return (
    <div className="flex gap-[3px]">
      <svg viewBox="0 0 12 12" width="12" height="12" fill="none" stroke="#555">
        <rect x=".5" y=".5" width="11" height="11" rx="2" />
        <rect x="4" y="3" width="5" height="4" />
        <rect x="3" y="5" width="4" height="4" />
      </svg>
      <svg viewBox="0 0 12 12" width="12" height="12" fill="none" stroke="#444">
        <rect x=".5" y=".5" width="11" height="11" rx="2" />
        <path d="M3 3l6 6M9 3l-6 6" strokeWidth="1.400" />
      </svg>
    </div>
  );
}

const menuItems: (string | [string, string?, string?])[] = [
  ['Save Project', 'save', '⌘ S'],
  'sep',
  ['New Layout...', 'newLayout', '⌘ N'],
  ['Duplicate Layout...', 'dupLayout'],
  ['Delete Layout...', 'del'],
  ['Layout Manager...', 'manager'],
  ['Layouts', '>'],
  'sep',
  ['Layout Properties...'],
  ['Rename Layout...'],
  ['Page Properties...'],
  ['Add Pages...', 'pageNew'],
  'sep',
  ['Add Items from Template...', 'folder'],
  ['Save as Template...', 'saveAs'],
  'sep',
  ['Export as Image...', 'expImg'],
  ['Export as SVG...', 'expSvg'],
  ['Export as PDF...', 'expPdf'],
  'sep',
  ['Printer Page Setup...', undefined, '⇧ ⌘ P'],
  ['Print...', 'print', '⌘ P'],
  'sep',
  ['Close', undefined, '⌘ Q'],
];

function LayoutMenu() {
  return (
    <div className="absolute left-[115px] top-[25px] w-[272px] h-[472px] pt-[5px] bg-[#e8e8e8] rounded-b-[7px] shadow-[0_6px_24px_rgba(0,0,0,0.3)] text-[13.5px] text-[#333] z-30">
      {menuItems.map((m, i) => {
        if (m === 'sep')
          return (
            <div key={i} className="h-[11px] flex items-center px-[14px]">
              <div className="h-px w-full bg-[#d6d6d6]" />
            </div>
          );
        const [label, icon, key] = m as [string, string?, string?];
        const on = label === 'Export as Image...';
        const hasIcon = icon && icon !== '>';
        return (
          <div key={i} className={'relative h-[22px] flex items-center ' + (hasIcon ? 'pl-[36px]' : 'pl-[14px]') + (on ? ' text-white' : '')}>
            {on && <div className="absolute left-[4px] right-[5px] -top-px -bottom-px rounded-[5px] bg-[#4c9bf6]" />}
            {hasIcon &&
              (icon === 'del' ? (
                <svg viewBox="0 0 16 16" width="15" height="15" className="absolute left-[14px]" fill="none" stroke="#d23a3a" strokeWidth="1.500">
                  <path d="M2 3.500h12M5 3l1-1.500h4L11 3M3.500 4v10.500h9V4M6.500 6v7M9.500 6v7" />
                </svg>
              ) : (
                <Ico name={icon!} size={16} className="absolute left-[14px]" />
              ))}
            <span className="relative">{label}</span>
            {key && <span className="absolute right-[15px] text-[#b4b4b4] text-[12.500px]">{key}</span>}
            {icon === '>' && (
              <svg viewBox="0 0 8 12" width="7" height="11" className="absolute right-[15px]" fill="none" stroke="#444" strokeWidth="1.600">
                <path d="M1.500 1l5 5-5 5" />
              </svg>
            )}
          </div>
        );
      })}
    </div>
  );
}

function MenuBar() {
  const items: [string, string][] = [
    ['Edit', 'ml-[6px]'],
    ['View', 'ml-[21px]'],
    ['Items', 'ml-[20px]'],
    ['Add Item', 'ml-[20px]'],
    ['Atlas', 'ml-[20px]'],
    ['Settings', 'ml-[19px]'],
  ];
  return (
    <div className="flex items-center h-[24px] shrink-0 bg-[linear-gradient(90deg,#49452c,#55502f_50%,#4c4630)] text-white text-[13.5px] font-medium">
      <svg viewBox="0 0 16 18" width="14" height="16" className="ml-[12px]" fill="#fff">
        <path d="M11.600 9.500c0-2 1.600-2.900 1.700-3-1-1.400-2.400-1.600-2.900-1.600-1.200-.1-2.400.7-3 .7-.7 0-1.600-.7-2.600-.7C3.400 5 2 5.800 1.300 7.100c-1.500 2.500-.4 6.300 1 8.400.7 1 1.500 2.100 2.600 2 1-.04 1.400-.7 2.700-.7 1.200 0 1.600.7 2.700.6 1.100 0 1.800-1 2.500-2 .8-1.100 1.100-2.200 1.100-2.300 0 0-2.200-.8-2.300-3.600zM9.600 3.300c.6-.7 1-1.600.9-2.600-.8 0-1.800.5-2.400 1.300-.5.6-1 1.600-.9 2.500.9.100 1.800-.4 2.400-1.200z" />
      </svg>
      <span className="ml-[20px] w-[68px] font-bold whitespace-nowrap overflow-hidden">QGIS-LTR</span>
      <span className="relative w-[70px] h-full flex items-center justify-center">
        <span className="absolute inset-0 bg-white/20 rounded-[4px]" />
        <span className="relative">Layout</span>
      </span>
      {items.map(([t, cls]) => (
        <span key={t} className={cls}>{t}</span>
      ))}
    </div>
  );
}

const browserRows: [string, string, boolean?][] = [
  ['/Volumes', 'dir', true],
  ['Favorites', 'star'],
  ['Spatial Bookmarks', 'bm', true],
  ['Home', 'home', true],
  ['/ (apt u)', 'dir', true],
  ['GeoPackage', 'gpkg'],
  ['SpatiaLite', 'feather'],
  ['PostgreSQL', 'pg'],
  ['SAP HANA', 'sap'],
  ['STAC', 'stac'],
  ['MS SQL Server', 'mssql'],
  ['Oracle', 'oracle'],
  ['WMS/WMTS', 'wms'],
  ['Cloud', 'cloud'],
  ['Scenes', 'scene'],
  ['SensorThings', 'sensor'],
  ['Vector Tiles', 'vtiles'],
  ['XYZ Tiles', 'xyz', true],
  ['WCS', 'wcs'],
  ['WFS / OGC API - Features', 'wfs'],
  ['ArcGIS REST Servers', 'arc'],
];

const treeIcons: Record<string, ReactNode> = {
  dir: <path d="M3 20V5h6l2 2h10v13z" fill="#fafafa" stroke="#aaa" />,
  star: <path d="M12 2l3 7 7 .5-5.500 4.500 2 7.500-6.500-4-6.500 4 2-7.500L2 9.500 9 9z" fill="#f6df55" stroke="#d4b83a" />,
  bm: (
    <>
      <path d="M4 3h16v18H4z" fill="#eaeaea" stroke="#aaa" />
      <path d="M12 3h4v8l-2-2-2 2z" fill="#6d97c4" />
    </>
  ),
  home: (
    <>
      <rect x="3" y="3" width="18" height="18" fill="#fff" stroke="#888" />
      <path d="M6 13l6-6 6 6M8 12v6h8v-6" fill="none" stroke="#444" />
    </>
  ),
  gpkg: (
    <>
      <path d="M3 10l9-3 9 3v10l-9 3-9-3z" fill="#f3d94a" stroke="#a89824" />
      <circle cx="12" cy="7" r="6" fill="#5f8cc0" />
    </>
  ),
  feather: <path d="M4 22C5 10 12 3 21 2c0 7-4 13-11 13-2 2-4 5-6 7z" fill="#9cb9d6" stroke="#6f8eae" />,
  pg: <path d="M5 3c5-2 13-2 15 2 2 5-1 9-4 10v6c-3 1-4-1-4-3-4 1-7-1-8-5S2 5 5 3z" fill="#5d86ad" stroke="#2f4f70" />,
  sap: (
    <>
      <rect x="2" y="2" width="20" height="20" fill="none" stroke="#5f8cc0" strokeDasharray="2 2" />
      <rect x="5" y="5" width="14" height="14" fill="#6d97c4" />
    </>
  ),
  stac: (
    <>
      <rect x="3" y="3" width="13" height="13" fill="#e8eef5" stroke="#8fa8c2" />
      <rect x="7" y="8" width="14" height="14" fill="#cfdcea" stroke="#8fa8c2" />
    </>
  ),
  mssql: <path d="M3 3c7 1 13 4 19 9-6 4-12 7-19 9 2-6 2-12 0-18z" fill="#5f86b4" stroke="#3d5f86" />,
  oracle: <rect x="2" y="5" width="20" height="14" rx="6" fill="#6d97c4" stroke="#3d5f86" />,
  wms: <Globe />,
  cloud: <path d="M6 18a4 4 0 0 1 0-8 6 6 0 0 1 11-1 5 5 0 0 1 2 9z" fill="#dce6f0" stroke="#7f9cb8" />,
  scene: (
    <>
      <path d="M3 7l9-4 9 4v11l-9 4-9-4z" fill="#dfe8f2" stroke="#7f9cb8" />
      <path d="M3 7l9 4 9-4M12 11v11" fill="none" stroke="#7f9cb8" />
    </>
  ),
  sensor: (
    <>
      <circle cx="12" cy="12" r="3" fill="#4f6f92" />
      <path d="M7 6c-3 3-3 9 0 12M17 6c3 3 3 9 0 12M4 4c-4 4-4 12 0 16M20 4c4 4 4 12 0 16" fill="none" stroke="#7f9cb8" strokeWidth="1.400" />
    </>
  ),
  vtiles: <path d="M2 2h20v20H2zM9 2v20M15 2v20M2 9h20M2 15h20" fill="#8da6bf" stroke="#33475c" />,
  xyz: <path d="M2 2h5v5H2zM9.500 2h5v5h-5zM17 2h5v5h-5zM2 9.500h5v5H2zM9.500 9.500h5v5h-5zM17 9.500h5v5h-5zM2 17h5v5H2zM9.500 17h5v5h-5zM17 17h5v5h-5z" fill="#7fa3cc" />,
  wcs: <Globe c="#2f4f70" />,
  wfs: <Globe c="#7f9cb8" />,
  arc: (
    <>
      <Globe c="#7f9cb8" />
      <path d="M5 8l5-2 1 6-3 5-3-4z" fill="#3d5f86" />
    </>
  ),
};

function Caret2({ right }: { right?: boolean }) {
  return right ? (
    <div className="w-0 h-0 border-y-[4px] border-y-transparent border-l-[5px] border-l-[#555]" />
  ) : (
    <div className="w-0 h-0 border-x-[4px] border-x-transparent border-t-[5px] border-t-[#555]" />
  );
}

function BrowserPanel() {
  return (
    <div className="flex flex-col h-[525px] shrink-0">
      <div className="h-[20px] pl-[3px] flex items-center text-[11.500px] text-[#333]">Browser</div>
      <div className="h-[30px]">
        <Tools
          size={18}
          items={[
            ['addDock', 15],
            ['refresh', 40],
            ['filter', 65],
            ['collapse', 91],
            ['expand', 113],
          ]}
        />
      </div>
      <div className="flex-1 bg-white border-y border-r border-[#c0c0c0] font-['Open_Sans',sans-serif] text-[13px] text-[#333] overflow-hidden">
        {browserRows.map(([t, ic, exp]) => (
          <div key={t} className="flex items-center h-[18px]">
            <div className="w-[17px] pl-[6px]">{exp && <Caret2 right />}</div>
            <svg viewBox="0 0 24 24" width="17" height="17" strokeWidth="1" className="ml-px">
              {treeIcons[ic]}
            </svg>
            <span className="ml-[6px] whitespace-nowrap">{t}</span>
          </div>
        ))}
      </div>
    </div>
  );
}

function Check({ on = true }: { on?: boolean }) {
  return (
    <div className="w-[13px] h-[13px] flex items-center justify-center bg-white border border-[#b5b5b5] rounded-[2px] shrink-0">
      {on && (
        <svg viewBox="0 0 12 12" width="11" height="11" fill="none" stroke="#222" strokeWidth="1.500">
          <path d="M2.500 6l2.500 4.500L9.500 1.500" />
        </svg>
      )}
    </div>
  );
}

function LayersPanel() {
  return (
    <div className="flex flex-col flex-1 min-h-0">
      <div className="flex items-center justify-between h-[32px] pl-[3px] pr-[1px] text-[11.500px] text-[#333]">
        <span>Layers</span>
        <DockButtons />
      </div>
      <div className="h-[16px]">
        <Tools
          size={18}
          items={[
            ['brush', 15],
            ['addGroup', 40],
            ['eye', 65],
            ['filterY', 90],
            ['expr', 116],
            ['arrow', 133],
            ['expand', 153],
            ['collapse', 177],
            ['rmLayer', 202],
          ]}
        />
      </div>
      <div className="mt-[8px] flex-1 bg-white border-y border-r border-[#c0c0c0] font-['Open_Sans',sans-serif] text-[13px] text-[#333]">
        <div className="flex items-center h-[18px] bg-[#dcdcdc]">
          <div className="ml-[23px]"><Check /></div>
          <div className="ml-[7px] w-[16px] h-[16px] border border-[#222] bg-[#eee]" />
          <span className="ml-[6px] font-bold underline">Plots Layer</span>
        </div>
        <div className="flex items-center h-[18px]">
          <div className="ml-[6px] w-[17px]"><Caret2 /></div>
          <Check />
          <svg viewBox="0 0 16 16" width="16" height="16" className="ml-[7px]" fill="none" stroke="#999">
            <circle cx="13" cy="2" r="1" />
            <circle cx="5" cy="6" r="1" />
            <circle cx="3" cy="12" r="1" />
          </svg>
          <span className="ml-[6px] font-bold">Heatmap Layer</span>
        </div>
        <div className="flex h-[96px] ml-[43px]">
          <div className="w-[16px] h-full bg-[linear-gradient(#f33,#ff9a55_30%,#fbe56d_50%,#a9ee98_70%,#d8e2fb_90%,#fff)]" />
          <div className="ml-[6px] flex flex-col justify-between leading-[16px]">
            <span>Maximum</span>
            <span>Minimum</span>
          </div>
        </div>
      </div>
    </div>
  );
}

// one token of code: spaces are shown as dots, the way the QGIS editor does
function Code({ t, c, i }: { t: string; c: string; i?: boolean }) {
  const parts = t.split(' ');
  return (
    <span className={i ? 'italic' : ''} style={{ color: c }}>
      {parts.map((p, k) => (
        <span key={k}>
          {k > 0 && <span className="text-[#c4c4c4]">·</span>}
          {p}
        </span>
      ))}
    </span>
  );
}

const cmt = '#8a8a8a';
const blu = '#3e6fae';
const olv = '#7f9500';
const red = '#c8202c';
const pur = '#8a55b5';

type Line = [string, [string, string, boolean?][]];

const consoleLines: Line[] = [
  ['2', [["# Use iface to access QGIS API interface or type '?' for more info", cmt, true]]],
  ['3', [['# Security warning: typing commands from an untrusted source can harm your', cmt, true]]],
  ['', [[' computer', cmt, true]]],
  ['4', [['>>> ', pur], ['exec(compile(Path(', blu], ["'/Users/nahmed/Downloads/For students/Section1_QGIS_", olv]]],
  ['', [["and_Python/are_pyqgis.py'", olv], [').read_text(), ', blu], ["'/Users/nahmed/Downloads/For stude", olv]]],
  ['', [["nts/Section1_QGIS_and_Python/are_pyqgis.py'", olv], [', ', blu], ["'exec'", olv], ['))', pur]]],
  ['5', [['Sensor data successfully loaded!', blu]]],
  ['6', [['Field ', blu], ["'Soil Moisture 1 (VWC)_Normalized'", olv], [' found!', blu]]],
  ['7', [['Shapefile successfully loaded!', blu]]],
  ['8', [['Layer stylized successfully!', blu]]],
  ['9', [['CRS EPSG:', blu], ['3857', red], [' set!', blu]]],
  ['10', [['Project saved at: /Users/nahmed/Downloads/For students/Section1_QGIS_and_P', blu]]],
  ['', [['ython/your_project_outfile.qgs', blu]]],
  ['11', []],
];

const editorLines: Line[] = [
  ['75', []],
  ['76', [['filtered_df = filtered_df.dropna(subset=[label_name])', blu]]],
  ['77', []],
  ['78', []],
  ['79', [['# Calculate Q1 (25th percentile) and Q3 (75th percentile)', cmt, true]]],
  ['80', [['Q1 = filtered_df[label_name].quantile(', blu], ['0.25', red], [')', pur]]],
  ['81', [['Q3 = filtered_df[label_name].quantile(', blu], ['0.75', red], [')', pur]]],
  ['82', []],
  ['83', [['# Calculate the IQR', cmt, true]]],
  ['84', [['IQR = Q3 - Q1', blu]]],
  ['85', []],
  ['86', [['# Define a threshold (e.g., 3 * IQR for conservative outlier removal)', cmt, true]]],
  ['87', [['threshold = ', blu], ['5', red]]],
  ['88', []],
  ['89', [['# Filter out outliers', cmt, true]]],
  ['90', [['filtered_df = filtered_df[(filtered_df[label_name] >= (Q1 - threshold * IQR)) & (filtered_df[label_name', blu]]],
];

function CodeLines({ lines, gutter, num }: { lines: Line[]; gutter: string; num: string }) {
  return (
    <div className="relative h-full font-['DejaVu_Sans_Mono',monospace] text-[13px] leading-[16px] overflow-hidden whitespace-pre">
      <div className={'absolute left-0 inset-y-0 bg-[#f3f3f3] ' + gutter} />
      {lines.map(([n, toks], i) => (
        <div key={i} className="relative flex h-[16px]">
          <span className={'text-right text-[#666] shrink-0 text-[12px] ' + gutter + ' ' + num}>{n}</span>
          <span>
            {toks.map((t, k) => (
              <Code key={k} t={t[0]} c={t[1]} i={t[2]} />
            ))}
          </span>
        </div>
      ))}
    </div>
  );
}

function VScroll({ thumb = 'h-[14px]' }: { thumb?: string }) {
  return (
    <div className="relative flex flex-col w-[14px] h-full bg-[#dcdcdc] border-l border-[#c4c4c4] shrink-0">
      <div className="h-[14px] flex items-center justify-center bg-[#f5f5f5]">
        <div className="w-0 h-0 border-x-[4px] border-x-transparent border-b-[5px] border-b-[#555]" />
      </div>
      <div className={'bg-[#f5f5f5] border-y border-[#ccc] ' + thumb} />
      <div className="mt-auto h-[14px] flex items-center justify-center bg-[#f5f5f5]">
        <Caret />
      </div>
    </div>
  );
}

function ConsolePanel() {
  return (
    <div className="relative flex-1 flex min-h-0 border-l border-[#c0c0c0]">
      <span className="absolute left-[10px] top-[8px] text-[11.500px] text-[#333]">Python Console</span>
      <div className="absolute right-[2px] top-[10px]"><DockButtons /></div>
      <div className="flex flex-col w-[642px] pl-[5px] pt-[29px] shrink-0">
        <div className="h-[22px]">
          <Tools
            origin={299}
            size={18}
            items={[
              ['broom', 315],
              ['play', 340],
              ['editorIco', 372, 'a'],
              ['sep', 390],
              ['wrench', 404],
              ['book', 430],
              ['sep', 445],
              ['panel', 460, 'a'],
            ]}
          />
        </div>
        <div className="mt-[11px] h-[239px] flex bg-white border border-[#b5b5b5]">
          <div className="flex-1 min-w-0">
            <CodeLines lines={consoleLines} gutter="w-[31px]" num="pr-[3px]" />
          </div>
          <VScroll />
        </div>
        <div className="mt-[4px] h-[57px] bg-white border border-[#b5b5b5] font-['DejaVu_Sans_Mono',monospace] text-[13px] leading-[16px] text-[#555] pl-[3px]">&gt;&gt;&gt;</div>
      </div>
      <div className="flex flex-col flex-1 min-w-0 pl-[8px] pt-[29px]">
        <div className="h-[22px]">
          <Tools
            origin={944}
            size={18}
            items={[
              ['openFile', 959],
              ['editorIco', 984],
              ['sep', 1003],
              ['saveG', 1016],
              ['saveB', 1041],
              ['sep', 1057],
              ['play', 1073],
              ['sep', 1089],
              ['cutR', 1105],
              ['copyG', 1130],
              ['pasteY', 1155],
              ['sep', 1171],
              ['find', 1187],
              ['sep', 1203],
              ['hash', 1219],
              ['wand', 1244],
              ['sep', 1260],
              ['dots', 1275],
            ]}
          />
        </div>
        <div className="relative flex h-[31px] mt-[5px] border-b border-[#b5b5b5]">
          <div className="w-[32px] flex items-center pl-[7px] pb-[2px]"><Ico name="plus" size={16} /></div>
          <div className="flex items-center h-[31px] w-[152px] bg-white border-x border-t border-[#c4c4c4] text-[14px] text-[#222] -mb-px">
            <svg viewBox="0 0 14 16" width="13" height="15" className="ml-[12px]" fill="none" stroke="#9a9a9a">
              <rect x="1" y="1" width="11" height="14" fill="#eee" />
              <path d="M3 5h7M3 8h7M3 11h5" />
              <path d="M9 1h4v4" stroke="#d9a02a" />
            </svg>
            <span className="ml-[5px]">are_pyqgis.py</span>
            <svg viewBox="0 0 12 12" width="12" height="12" className="ml-[8px]" stroke="#111" strokeWidth="2">
              <path d="M2 1l8 10M10 1L2 11" />
            </svg>
          </div>
          <div className="absolute right-[3px] top-[9px] w-0 h-0 border-x-[9px] border-x-transparent border-t-[11px] border-t-[#333]" />
        </div>
        <div className="flex flex-col mt-px h-[273px] bg-white border border-[#b5b5b5]">
          <div className="flex flex-1 min-h-0">
            <div className="flex-1 min-w-0 relative">
              <CodeLines lines={editorLines} gutter="w-[45px]" num="pr-[16px]" />
              <div className="absolute top-0 bottom-0 left-[670px] w-px bg-[#eee]" />
            </div>
            <VScroll thumb="h-[170px]" />
          </div>
          <div className="flex items-center h-[15px] bg-[#dcdcdc] border-t border-[#c4c4c4] shrink-0">
            <div className="w-[15px] flex justify-center"><Caret2 right /></div>
            <div className="w-[330px] h-full bg-[#f7f7f7] border-r border-[#ccc]" />
            <div className="ml-auto w-[16px] flex justify-center"><Caret2 right /></div>
          </div>
        </div>
      </div>
    </div>
  );
}

function Spin({ value, className }: { value: string; className: string }) {
  return (
    <div className={'flex items-center bg-white border border-[#bbb] rounded-[3px] ' + className}>
      <span className="flex-1 pl-[6px]">{value}</span>
      <div className="w-[14px] h-full border-l border-[#ccc] flex flex-col items-center justify-center gap-[3px]">
        <div className="w-0 h-0 border-x-[3.500px] border-x-transparent border-b-[4px] border-b-[#555]" />
        <div className="w-0 h-0 border-x-[3.500px] border-x-transparent border-t-[4px] border-t-[#555]" />
      </div>
    </div>
  );
}

function StatusBar() {
  const box = 'flex items-center h-[22px] bg-white border border-[#c0c0c0] rounded-[3px]';
  return (
    <div className="flex items-center h-[30px] pt-[2px] shrink-0 bg-[#ececec] text-[12px] text-[#222] rounded-b-[10px] whitespace-nowrap">
      <div className="ml-[3px] w-[213px] h-[23px] flex items-center bg-white border border-[#c4c4c4] rounded-[4px] text-[13.500px] text-[#8b8b8b]">
        <svg viewBox="0 0 16 16" width="14" height="14" className="ml-[7px]" fill="none" stroke="#999" strokeWidth="1.400">
          <circle cx="7" cy="7" r="5" />
          <path d="M11 11l4 4" />
        </svg>
        <span className="ml-[8px]">Type to locate (⌘K)</span>
      </div>
      <span className="ml-[10px]">Ready</span>
      <span className="ml-auto w-[56px]">Coordinate</span>
      <div className={box + ' ml-[4px] w-[151px] pl-[8px]'}>-10070976.7,4700033.0</div>
      <svg viewBox="0 0 16 20" width="16" height="20" className="ml-[5px]" fill="none" stroke="#444">
        <ellipse cx="8" cy="10" rx="5" ry="8" />
        <path d="M4 5l8 10M12 5L4 15M8 2v16" />
      </svg>
      <span className="ml-[13px] w-[29px]">Scale</span>
      <div className={box + ' ml-[4px] w-[91px] pl-[2px]'}>
        <span className="flex-1">1:1861</span>
        <div className="w-[20px] h-full border-l border-[#ccc] flex items-center justify-center"><Caret /></div>
      </div>
      <svg viewBox="0 0 14 20" width="14" height="18" className="ml-[12px]" fill="#666">
        <path d="M3 9V6a4 4 0 0 1 8 0v3h-1.500V6a2.500 2.500 0 0 0-5 0v3zM1 9h12v10H1z" />
      </svg>
      <span className="ml-[9px] w-[48px]">Magnifier</span>
      <Spin value="100%" className="ml-[4px] w-[92px] h-[22px]" />
      <span className="ml-[10px] w-[44px]">Rotation</span>
      <Spin value="0.0 °" className="ml-[10px] w-[91px] h-[22px]" />
      <div className="ml-[8px]"><Check /></div>
      <span className="ml-[5px] w-[37px]">Render</span>
      <svg viewBox="0 0 24 24" width="16" height="16" className="ml-[16px]" strokeWidth="1.200">
        <Globe c="#666" />
      </svg>
      <span className="ml-[3px] w-[59px]">EPSG:3857</span>
      <svg viewBox="0 0 16 16" width="16" height="17" className="ml-[23px] mr-[25px]" fill="#666">
        <path d="M8 1a7 6.500 0 0 1 4 11.800L14 15.500l-4.500-2.200A7 6.500 0 1 1 8 1z" />
      </svg>
    </div>
  );
}

function HRuler() {
  const ticks = Array.from({ length: 84 }, (_, i) => i);
  return (
    <svg width="560" height="17" className="block">
      {ticks.map((i) => {
        const x = 1 + i * 7.03;
        const major = i % 10 === 0;
        const mid = i % 5 === 0;
        return <path key={i} d={`M${x} 17v-${major ? 17 : mid ? 6 : 3}`} stroke="#444" />;
      })}
      {[-50, 0, 50, 100, 150, 200, 250, 300].map((v, i) => (
        <text key={v} x={3 + i * 70.3} y="9" fontSize="9" fill="#555" fontFamily="Liberation Sans, sans-serif">{v}</text>
      ))}
      <path d="M477 0v17" stroke="#e0272a" />
    </svg>
  );
}

function VRuler() {
  const ticks = Array.from({ length: 74 }, (_, i) => i);
  return (
    <svg width="15" height="517" className="block shrink-0">
      {ticks.map((i) => {
        const y = 39 + i * 7.1;
        const major = i % 10 === 0;
        return <path key={i} d={`M15 ${y}h-${major ? 15 : i % 5 === 0 ? 6 : 3}`} stroke="#444" />;
      })}
      {[-50, 0, 50, 100, 150, 200, 250].map((v, i) => (
        <text key={v} transform={`translate(8 ${42 + i * 71}) rotate(-90)`} textAnchor="end" fontSize="9" fill="#555" fontFamily="Liberation Sans, sans-serif">{v}</text>
      ))}
    </svg>
  );
}

const blobs: [number, number, number, string][] = [
  [870, 385, 46, 'cool'],
  [730, 330, 42, 'cool'],
  [780, 365, 42, 'cool'],
  [813, 322, 44, 'hot'],
  [800, 520, 46, 'cool'],
  [645, 405, 54, 'cool'],
  [695, 455, 44, 'cool'],
  [690, 575, 54, 'cool'],
  [835, 478, 46, 'warm'],
  [750, 538, 64, 'hot'],
  [838, 438, 58, 'max'],
  [480, 610, 40, 'cool'],
  [485, 582, 46, 'warm'],
  [530, 550, 40, 'cool'],
  [578, 588, 44, 'warm'],
  [595, 660, 46, 'warm'],
  [650, 678, 48, 'warm'],
];

const divL = [[475, 522], [514, 477], [555, 435], [595, 392], [635, 347], [673, 303], [712, 258]];
const divR = [[675, 710], [713, 667], [752, 623], [793, 578], [832, 533], [873, 490], [915, 443]];

function Heatmap() {
  return (
    <svg viewBox="0 0 1380 960" className="absolute left-[-13px] top-[-7px] w-[460px] h-[320px]">
      <defs>
        <radialGradient id="cool">
          <stop offset="0" stopColor="#aeeeac" />
          <stop offset=".5" stopColor="#c4f0c8" />
          <stop offset=".8" stopColor="#e0e5fb" />
          <stop offset="1" stopColor="#e0e5fb" stopOpacity="0" />
        </radialGradient>
        <radialGradient id="warm">
          <stop offset="0" stopColor="#f6ea78" />
          <stop offset=".35" stopColor="#b6eea0" />
          <stop offset=".75" stopColor="#dfe5fb" />
          <stop offset="1" stopColor="#dfe5fb" stopOpacity="0" />
        </radialGradient>
        <radialGradient id="hot">
          <stop offset="0" stopColor="#fb9a55" />
          <stop offset=".25" stopColor="#fbb35f" />
          <stop offset=".45" stopColor="#f6e27a" />
          <stop offset=".7" stopColor="#b8eea5" />
          <stop offset=".9" stopColor="#dfe5fb" />
          <stop offset="1" stopColor="#dfe5fb" stopOpacity="0" />
        </radialGradient>
        <radialGradient id="max">
          <stop offset="0" stopColor="#f40000" />
          <stop offset=".15" stopColor="#fb3a2a" />
          <stop offset=".38" stopColor="#fca355" />
          <stop offset=".58" stopColor="#f6e67a" />
          <stop offset=".78" stopColor="#b8eea5" />
          <stop offset=".94" stopColor="#dfe5fb" />
          <stop offset="1" stopColor="#dfe5fb" stopOpacity="0" />
        </radialGradient>
      </defs>
      {blobs.map(([x, y, r, g], i) => (
        <circle key={i} cx={x} cy={y} r={r} fill={`url(#${g})`} />
      ))}
      <polygon points="437,560 748,214 952,405 640,750" fill="none" stroke="#666" strokeWidth="2" />
      {divL.map(([x, y], i) => (
        <g key={i} fill="none">
          <path d={`M${x} ${y}L${divR[i][0]} ${divR[i][1]}`} stroke="#555" strokeWidth="2" />
          <path d={`M${x + 4} ${y + 5}L${divR[i][0] - 4} ${divR[i][1] - 5}`} stroke="#999" strokeWidth="2.500" />
        </g>
      ))}
    </svg>
  );
}

function Handle({ className }: { className: string }) {
  return <div className={'absolute w-[11px] h-[11px] border border-[#4a90b8] bg-white ' + className} />;
}

function LayoutWindow() {
  const sideIcons = ['hand', 'zoomBox', 'select', 'moveContent', 'nodes', 'addMap', 'add3d', 'addPic', 'addLabel', 'addLegend', 'addScale', 'addNorth', 'addShape', 'addMarker', 'addArrow'];
  return (
    <div className="absolute left-[447px] top-[175px] w-[1012px] h-[668px] flex flex-col bg-[#eeeeee] rounded-[10px] border border-[#d0d0d0] shadow-[0_10px_40px_rgba(0,0,0,0.28)] overflow-hidden z-20 text-[#333]">
      <div className="relative h-[28px] shrink-0 flex items-center justify-center bg-[#efefef] border-b border-[#d6d6d6] font-bold text-[14.500px] text-[#4a4a4a]">
        <div className="absolute left-[8px] flex gap-[8px]">
          <div className="w-[12px] h-[12px] rounded-full bg-[#f8564e]" />
          <div className="w-[12px] h-[12px] rounded-full bg-[#fbb12d]" />
          <div className="w-[12px] h-[12px] rounded-full bg-[#27c03f]" />
        </div>
        *Heatmap Layout
      </div>
      <div className="relative h-[38px] shrink-0 bg-[#f5f5f5] border-b border-[#d2d2d2]">
        <Tools
          origin={447}
          items={[
            ['grip', 453],
            ['save', 476],
            ['sep', 496],
            ['newLayout', 516],
            ['dupLayout', 549],
            ['manager', 582],
            ['folder', 615],
            ['saveAs', 649],
            ['sep', 669],
            ['pageNew', 690],
            ['sep', 709],
            ['print', 728],
            ['expImg', 761],
            ['expSvg', 794],
            ['expPdf', 827],
            ['undo', 860],
            ['redo', 892],
            ['grip', 920],
            ['atlas', 942, 'd'],
            ['first', 975, 'd'],
            ['prev', 1008, 'd'],
          ]}
        />
        <div className="absolute left-[579px] top-[5px] w-[64px] h-[29px] flex items-center bg-white border border-[#d0d0d0] rounded-[3px] text-[#c4c4c4] text-[13px] pl-[5px]">1</div>
        <div className="absolute left-[643px] top-[17px]"><Caret /></div>
        <div className="absolute left-[660px] top-0 h-full">
          <Tools
            origin={1107}
            items={[
              ['next', 1126, 'd'],
              ['last', 1159, 'd'],
              ['atlasPrint', 1192, 'd'],
              ['atlasExp', 1225, 'd'],
              ['arrow', 1246],
              ['lensOff', 1270, 'd'],
            ]}
          />
        </div>
      </div>
      <div className="h-[38px] pt-[2px] shrink-0 bg-[#f5f5f5] border-b border-[#d2d2d2]">
        <Tools
          origin={447}
          items={[
            ['grip', 453],
            ['zoomIn', 476],
            ['zoomOut', 509],
            ['zoom11', 542],
            ['zoomFull', 575],
            ['refresh', 608],
            ['grip', 635],
            ['lock', 658],
            ['unlock', 690],
            ['group', 724],
            ['ungroup', 756],
            ['raise', 789],
            ['arrow', 800],
            ['alignL', 822],
            ['arrow', 833],
            ['distrib', 856],
            ['arrow', 866],
            ['resize', 889],
            ['arrow', 899],
          ]}
        />
      </div>
      <div className="flex flex-1 min-h-0">
        <div className="relative w-[39px] shrink-0 flex flex-col items-center pt-[18px] gap-[8px] border-r border-[#c8c8c8]">
          <div className="absolute top-[5px] w-[20px] h-[4px] border-y border-dotted border-[#bbb]" />
          {sideIcons.map((n) => (
            <div key={n} className="relative w-[24px] h-[24px] shrink-0">
              {n === 'select' && <div className="absolute -left-[4px] -top-[3px] w-[32px] h-[30px] rounded-[3px] bg-[#dcdcdc] border border-[#b5b5b5]" />}
              <Ico name={n} className={'relative' + (n === 'moveContent' || n === 'addMap' || n === 'add3d' ? ' opacity-60' : '')} />
            </div>
          ))}
          <svg viewBox="0 0 10 10" width="9" height="9" className="mt-[21px]" fill="none" stroke="#666" strokeWidth="1.300">
            <path d="M1 1l4 3 4-3M1 5l4 3 4-3" />
          </svg>
        </div>
        <div className="flex flex-col w-[575px] shrink-0 min-h-0">
          <div className="flex h-[17px] shrink-0">
            <div className="w-[15px]" />
            <HRuler />
          </div>
          <div className="flex flex-1 min-h-0 overflow-hidden">
            <VRuler />
            <div className="relative flex-1 bg-[#dcdcdc] overflow-hidden">
              <div className="absolute left-[78px] top-[117px] w-[418px] h-[295px] bg-[#a3a3a3]" />
              <div className="absolute left-[71px] top-[110px] w-[418px] h-[296px] bg-white">
                <Heatmap />
                <div className="absolute left-[24px] top-[28px] w-[388px] h-[251px] border border-[#4a90b8]">
                  <Handle className="left-[-1px] top-[-1px]" />
                  <Handle className="left-[188px] top-[-1px]" />
                  <Handle className="right-[-1px] top-[-1px]" />
                  <Handle className="left-[-1px] top-[120px]" />
                  <Handle className="right-[-1px] top-[120px]" />
                  <Handle className="left-[-1px] bottom-[-1px]" />
                  <Handle className="left-[188px] bottom-[-1px]" />
                  <Handle className="right-[-1px] bottom-[-1px]" />
                </div>
              </div>
            </div>
          </div>
        </div>
        <div className="flex flex-col flex-1 min-w-0 pl-[7px] font-['Open_Sans',sans-serif] text-[13px]">
          <div className="flex items-end h-[30px] shrink-0 border-b border-[#c8c8c8]">
            <div className="flex items-center justify-center w-[58px] h-[27px] bg-[#eeeeee] border-x border-t border-[#c8c8c8] rounded-t-[3px] -mb-px">Items</div>
            <div className="flex items-center justify-center w-[102px] h-[24px] bg-[#e2e2e2] border-r border-t border-[#c8c8c8]">Undo History</div>
          </div>
          <div className="flex items-center justify-between h-[19px] pt-[2px] shrink-0 pl-[4px] pr-[1px] text-[11.500px]">
            <span>Items</span>
            <DockButtons />
          </div>
          <div className="h-[211px] shrink-0 bg-white border border-[#c4c4c4]">
            <div className="flex items-center h-[20px] bg-[#f3f3f3] border-b border-[#d0d0d0]">
              <div className="flex w-[28px] h-full items-center justify-center border-r border-[#ddd]">
                <svg viewBox="0 0 16 10" width="15" height="10" fill="#999">
                  <path d="M0 5c4-6 12-6 16 0-4 6-12 6-16 0z" fill="#ddd" stroke="#999" />
                  <circle cx="8" cy="5" r="2.500" />
                </svg>
              </div>
              <div className="flex w-[28px] h-full items-center justify-center border-r border-[#ddd]">
                <svg viewBox="0 0 12 14" width="12" height="14" fill="#888">
                  <path d="M2 6V4a4 4 0 0 1 8 0v2H9V4a3 3 0 0 0-6 0v2zM0 6h12v8H0z" />
                </svg>
              </div>
              <span className="ml-[3px]">Item</span>
            </div>
            <div className="flex items-center h-[19px] bg-[#dcdcdc]">
              <div className="ml-[4px]"><Check /></div>
              <div className="ml-[15px]"><Check on={false} /></div>
              <div className="ml-[16px] w-[13px] h-[11px] border border-[#bbb] bg-[linear-gradient(90deg,#ccc,#f4f4f4)]" />
              <span className="ml-[8px] font-bold text-[#222]">Map 1</span>
            </div>
          </div>
          <div className="h-[7px] shrink-0" />
          <div className="flex items-end h-[28px] shrink-0 border-b border-[#c8c8c8]">
            <div className="flex items-center justify-center w-[65px] h-[27px] bg-[#eeeeee] border-x border-t border-[#c8c8c8] rounded-t-[3px] -mb-px">Layout</div>
            <div className="flex items-center justify-center w-[118px] h-[25px] bg-[#e2e2e2] border-r border-t border-[#c8c8c8]">Item Properties</div>
            <div className="flex items-center justify-center w-[66px] h-[25px] bg-[#e2e2e2] border-r border-t border-[#c8c8c8]">Guides</div>
          </div>
          <div className="flex items-center justify-between h-[21px] shrink-0 pl-[4px] pr-[1px] text-[11.500px]">
            <span>Layout</span>
            <DockButtons />
          </div>
          <div className="flex flex-1 min-h-0">
            <div className="flex-1 min-w-0 overflow-hidden pr-[10px]">
              <div className="flex items-center h-[20px] mt-[14px] pl-[14px]">
                <Caret3 />
                <span className="ml-[7px] font-bold">General Settings</span>
              </div>
              <div className="flex items-center h-[50px] mt-px ml-[12px] pl-[13px] pr-[13px] bg-[#ececec] border border-[#dcdcdc] rounded-[2px]">
                <span>Reference map</span>
                <div className="ml-auto w-[228px] h-[24px] flex items-center bg-[linear-gradient(#fff,#f4f4f4)] border border-[#c4c4c4] rounded-[3px]">
                  <div className="ml-[6px] w-[13px] h-[11px] border border-[#bbb] bg-[linear-gradient(90deg,#ccc,#f4f4f4)]" />
                  <span className="ml-[5px]">Map 1</span>
                  <div className="ml-auto mr-[9px]"><Caret /></div>
                </div>
              </div>
              <div className="flex items-center h-[20px] mt-[6px] pl-[14px]">
                <Caret3 />
                <span className="ml-[7px] font-bold">Guides and Grid</span>
              </div>
              <div className="h-[140px] mt-[2px] ml-[12px] pl-[13px] pr-[13px] pt-[11px] bg-[#ececec] border border-[#dcdcdc] rounded-[2px]">
                <div className="h-[16px] leading-[16px]">Grid spacing</div>
                <div className="flex mt-[8px] gap-[8px]">
                  <Spin value="10.00" className="w-[159px] h-[22px]" />
                  <div className="flex items-center w-[159px] h-[23px] -mt-px pl-[5px] bg-white border border-[#c4c4c4] rounded-[3px]">
                    mm
                    <div className="ml-auto mr-[9px]"><Caret /></div>
                  </div>
                </div>
                <div className="h-[16px] leading-[16px] mt-[7px]">Grid offset</div>
                <div className="flex mt-[8px] gap-[8px]">
                  <Spin value="x: 0.00" className="w-[159px] h-[22px]" />
                  <div className="w-[159px] h-[23px] mt-[15px] bg-white border border-[#c4c4c4] rounded-[3px]" />
                </div>
              </div>
            </div>
            <div className="pt-[4px] h-full shrink-0"><VScroll thumb="h-[38px]" /></div>
          </div>
        </div>
      </div>
      <div className="flex items-center h-[29px] shrink-0 bg-[#ececec] border-t border-[#d8d8d8] text-[13px] whitespace-nowrap">
        <span className="ml-[436px] w-[64px]">x: 289 mm</span>
        <span className="ml-[42px] w-[48px]">y: 0 mm</span>
        <span className="ml-[58px] w-[43px]">page: 1</span>
        <div className="ml-[63px] flex items-center w-[127px] h-[23px] bg-white border border-[#bbb] rounded-[3px] pl-[4px]">
          32.5%
          <div className="ml-auto w-[20px] h-full border-l border-[#ccc] flex items-center justify-center"><Caret /></div>
        </div>
        <div className="relative ml-[9px] w-[97px] h-[5px] bg-[#e0e0e0] border border-[#c4c4c4] rounded-full">
          <div className="absolute left-0 top-[-5px] w-[13px] h-[13px] bg-white border border-[#bbb] rounded-[4px]" />
        </div>
      </div>
    </div>
  );
}

function Caret3() {
  return <div className="w-0 h-0 border-x-[6px] border-x-transparent border-t-[7px] border-t-[#333]" />;
}

export default function App() {
  return (
    <div className="relative flex flex-col w-[1807px] h-[1264px] overflow-hidden bg-[#4a4630] font-['Roboto',sans-serif]">
      <MenuBar />
      <div className="flex flex-col h-[1235px] shrink-0 bg-[#eeeeee] rounded-t-[10px] rounded-b-[10px] overflow-hidden">
        <div className="relative h-[29px] pt-px shrink-0 flex items-center justify-center bg-[#e6e6e6] border-b border-[#cfcfcf] font-bold text-[14.500px] text-[#a6a6a6]">
          <div className="absolute left-[7px] flex gap-[8px]">
            <div className="w-[12px] h-[12px] rounded-full bg-[#cccccc] border border-[#b8b8b8]" />
            <div className="w-[12px] h-[12px] rounded-full bg-[#cccccc] border border-[#b8b8b8]" />
            <div className="w-[12px] h-[12px] rounded-full bg-[#cccccc] border border-[#b8b8b8]" />
          </div>
          *your_project_outfile — QGIS
        </div>
        <div className="h-[38px] shrink-0 bg-[#f5f5f5] border-b border-[#c9c9c9]">
          <Tools
            items={[
              ['grip', 6],
              ['file', 28],
              ['folder', 60],
              ['save', 94],
              ['zoomSel', 407],
              ['zoomLayer', 439],
              ['zoom11g', 472],
              ['zoomLast', 506],
              ['zoomNext', 539],
              ['decor', 571, 'd'],
              ['decor', 605, 'd'],
              ['bmMark', 640],
              ['bmPanel', 671],
              ['clock', 704],
              ['refresh', 736],
              ['grip', 763],
              ['selFeat', 785],
              ['arrow', 808],
              ['selForm', 831],
              ['arrow', 852],
              ['selDesel', 876],
              ['arrow', 898],
              ['selLoc', 921],
              ['arrow', 943],
              ['grip', 960],
              ['identify', 980],
              ['abacus', 1015],
              ['gear', 1048],
              ['sigma', 1080],
              ['attrTable', 1114],
              ['arrow', 1136],
              ['ruler', 1158],
              ['arrow', 1180],
              ['bubble', 1203],
              ['lensOff', 1236],
              ['arrow', 1257],
            ]}
          />
        </div>
        <div className="h-[41px] shrink-0 bg-[#f5f5f5] border-b-2 border-[#b8b8b8]">
          <Tools
            items={[
              ['grip', 6],
              ['dsm', 28],
              ['gpkgNew', 61],
              ['vNew', 95],
              ['arrow', 396],
              ['cloudNew', 419, 'd'],
              ['editPen', 452],
              ['arrow', 474],
              ['editSave', 497],
              ['trash', 529],
              ['cut', 563],
              ['copy', 596],
              ['paste', 629],
              ['undoG', 662],
              ['redo', 695],
              ['grip', 722],
              ['abcY', 743],
              ['pie', 776],
              ['sep', 797],
              ['abB', 817],
              ['abcR', 849],
              ['sep', 870],
              ['abG', 889],
              ['abcG1', 922],
              ['abcG2', 955],
              ['abcG3', 987],
              ['abcG4', 1020],
              ['grip', 1049],
              ['binoc', 1072],
              ['grip', 1098],
              ['python', 1120],
              ['grip', 1147],
              ['help', 1169],
              ['grip', 1196],
            ]}
          />
        </div>
        <div className="flex flex-1 min-h-0">
          <div className="flex flex-col w-[293px] shrink-0">
            <BrowserPanel />
            <LayersPanel />
          </div>
          <div className="flex flex-col flex-1 min-w-0">
            <div className="relative h-[735px] shrink-0 ml-[7px] bg-white border-b border-l border-[#b5b5b5]">
              <svg className="absolute inset-0 w-full h-full" fill="none" stroke="#222">
                <path d="M803 43l24-25 25 25" />
                <path d="M679 712l6 5 6-5" />
              </svg>
            </div>
            <ConsolePanel />
          </div>
        </div>
        <StatusBar />
      </div>
      <div className="flex flex-1 min-h-0 font-['DejaVu_Sans_Mono',monospace] text-[14px] leading-[14px] overflow-hidden">
        <div className="w-[150px] bg-[#1c2a14]" />
        <div className="w-[40px] bg-[#e4e4e4]" />
        <div className="flex-1 bg-white text-[#222] pl-[66px] whitespace-nowrap">Requirement already satisfied: matplotlib&gt;=3.3 ... 1.21.1 in /opt/homebrew/lib</div>
      </div>
      <LayoutWindow />
      <LayoutMenu />
      <svg className="absolute inset-0 w-full h-full z-40 pointer-events-none" fill="none" stroke="#d8351f" strokeWidth="3">
        <rect x="108" y="-4" width="93" height="32" rx="15" />
        <rect x="117.500" y="332" width="265" height="35" rx="17" />
        <path d="M349 112L228 35" />
        <path d="M218 28L237 32L229 44z" fill="#d8351f" stroke="none" />
        <path d="M534 443L413 366" />
        <path d="M403 359L422 363L414 375z" fill="#d8351f" stroke="none" />
      </svg>
    </div>
  );
}
